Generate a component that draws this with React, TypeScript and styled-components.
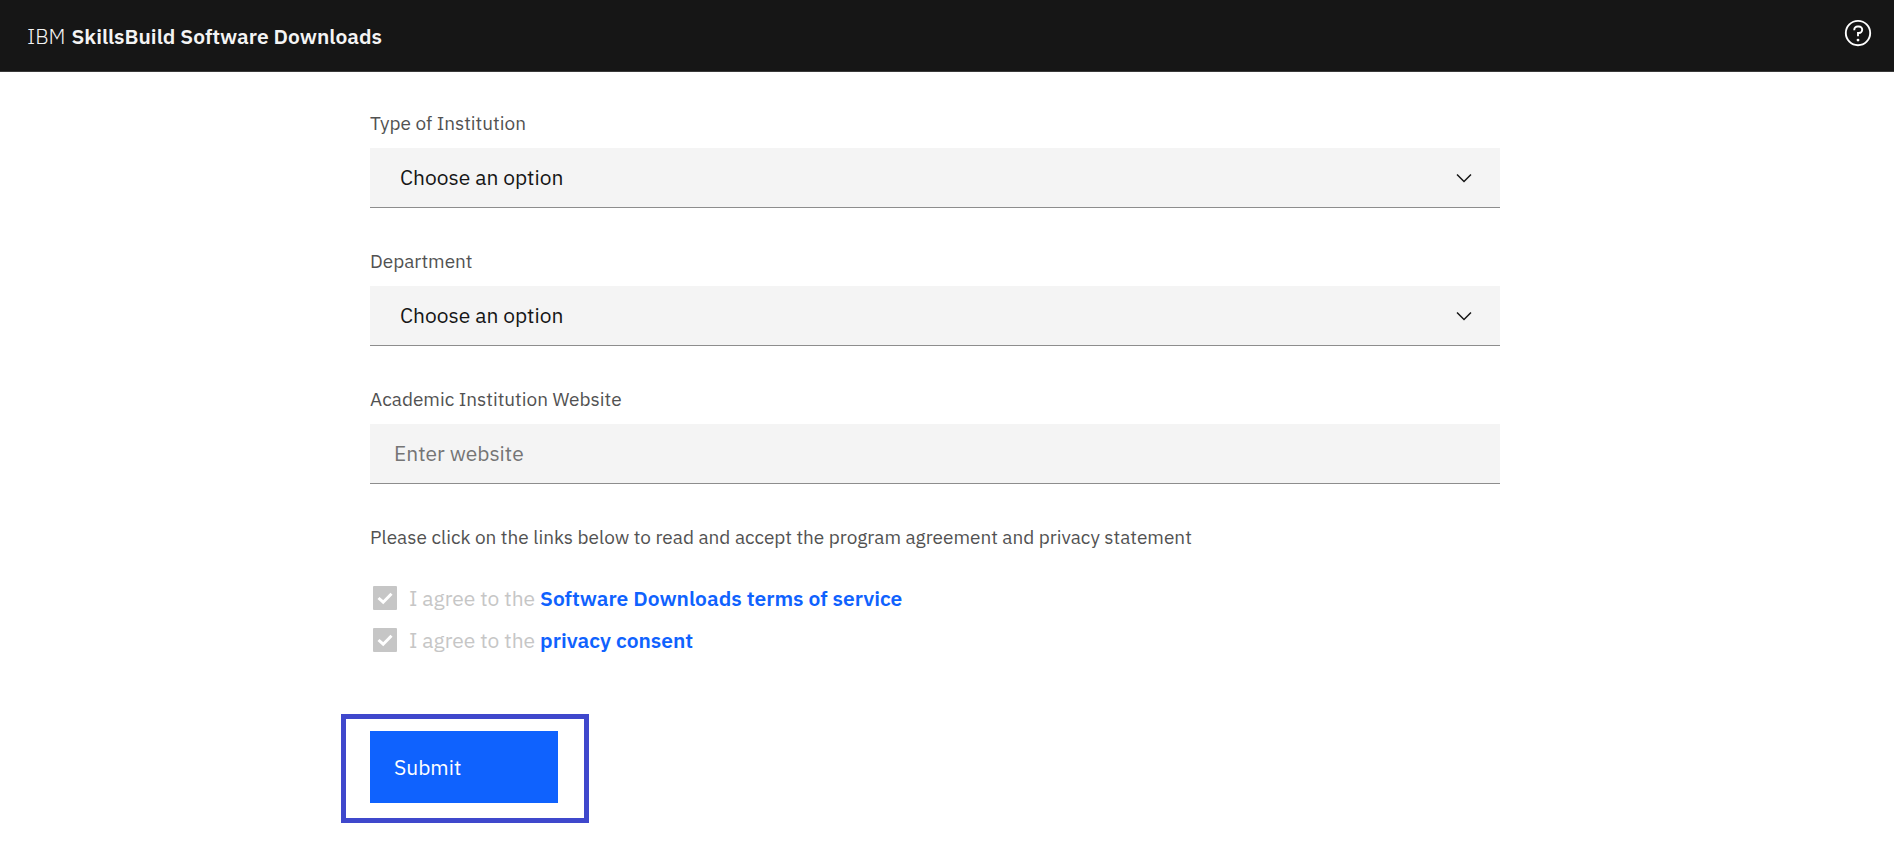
import React, { useState } from "react";
import styled, { createGlobalStyle } from "styled-components";

const GlobalStyle = createGlobalStyle`
  *, *::before, *::after { box-sizing: border-box; }
  body {
    margin: 0;
    background: #ffffff;
    color: #161616;
    font-family: "IBM Plex Sans", Roboto, "Liberation Sans", sans-serif;
    font-size: 21px;
    line-height: 30px;
  }
  button, input, select { font: inherit; }
`;

const Header = styled.header`
  display: flex;
  justify-content: space-between;
  height: 72px;
  background: #161616;
  border-bottom: 1px solid #393939;
`;

const Brand = styled.a`
  display: flex;
  align-items: center;
  gap: 6px;
  padding-left: 27px;
  color: #f4f4f4;
  text-decoration: none;
  font-weight: 300;
`;

const BrandName = styled.strong`
  font-weight: 600;
`;

const HelpButton = styled.button`
  display: grid;
  place-items: center;
  width: 72px;
  height: 66px;
  padding: 0;
  border: 0;
  background: transparent;
  color: #ffffff;
  cursor: pointer;
`;

const Main = styled.main`
  padding: 40px 24px 24px 0;
`;

const Form = styled.form`
  display: flex;
  flex-direction: column;
  gap: 42px;
  max-width: 1130px;
  margin: 0 auto;
`;

const Field = styled.div`
  display: flex;
  flex-direction: column;
  gap: 14px;
`;

const Label = styled.label`
  font-size: 19px;
  line-height: 22px;
  color: #525252;
`;

const Consent = styled.section`
  display: flex;
  flex-direction: column;
  gap: 35px;
`;

const Note = styled.p`
  margin: 0;
  font-size: 19px;
  line-height: 22px;
  color: #525252;
`;

const ControlWrap = styled.div`
  position: relative;
`;

const Control = styled.input<{ $inset: number }>`
  display: block;
  width: 100%;
  height: 60px;
  padding: 0 ${(p) => p.$inset}px 2px;
  border: 0;
  border-bottom: 1px solid #8d8d8d;
  border-radius: 0;
  background: #f4f4f4;
  color: #161616;
  appearance: none;
  &::placeholder { color: #757575; opacity: 1; }
`;

const Chevron = styled.svg`
  position: absolute;
  top: 18px;
  right: 24px;
  pointer-events: none;
`;

const Agreements = styled.div`
  display: flex;
  flex-direction: column;
  gap: 12px;
  padding-left: 3px;
`;

const AgreementRow = styled.div`
  display: flex;
  align-items: center;
  height: 30px;
`;

const CheckWrap = styled.span`
  display: grid;
  width: 24px;
  height: 24px;
  margin-right: 12px;
  > * { grid-area: 1 / 1; }
`;

const Checkbox = styled.input`
  appearance: none;
  width: 24px;
  height: 24px;
  margin: 0;
  border-radius: 1px;
  background: #c6c6c6;
`;

const CheckMark = styled.svg`
  pointer-events: none;
  z-index: 1;
`;

const AgreementLabel = styled.label`
  color: #c6c6c6;
`;

const TermsLink = styled.a`
  color: #0f62fe;
  font-weight: 600;
  text-decoration: none;
`;

const SubmitFrame = styled.div`
  align-self: flex-start;
  margin: 17px 0 0 -29px;
  padding: 12px 26px 15px 24px;
  border: 5px solid #3f48cc;
`;

const SubmitButton = styled.button`
  display: block;
  width: 188px;
  height: 72px;
  padding: 0 24px;
  border: 0;
  background: #0f62fe;
  color: #ffffff;
  text-align: left;
  cursor: pointer;
`;

function SelectField({ id, label }: { id: string; label: string }) {
  return (
    <Field>
      <Label htmlFor={id}>{label}</Label>
      <ControlWrap>
        <Control as="select" id={id} $inset={30}>
          <option>Choose an option</option>
        </Control>
        <Chevron width="24" height="24" viewBox="0 0 16 16" fill="#161616" aria-hidden="true">
          <path d="M8 11L3 6 3.7 5.3 8 9.6 12.3 5.3 13 6z" />
        </Chevron>
      </ControlWrap>
    </Field>
  );
}

function Agreement({ id, link }: { id: string; link: string }) {
  return (
    <AgreementRow>
      <CheckWrap>
        <Checkbox type="checkbox" id={id} checked disabled readOnly />
        <CheckMark width="24" height="24" viewBox="0 0 24 24" fill="none" stroke="#ffffff" strokeWidth="3" aria-hidden="true">
          <path d="M5.5 12 L10.2 16.2 L18.5 7.8" />
        </CheckMark>
      </CheckWrap>
      <AgreementLabel htmlFor={id}>
        I agree to the <TermsLink href="#">{link}</TermsLink>
      </AgreementLabel>
    </AgreementRow>
  );
}

export default function App() {
  const [website, setWebsite] = useState("");
  return (
    <>
      <GlobalStyle />
      <Header>
        <Brand href="#">
          IBM <BrandName>SkillsBuild Software Downloads</BrandName>
        </Brand>
        <HelpButton type="button" aria-label="Help">
          <svg width="30" height="30" viewBox="0 0 32 32" fill="currentColor" aria-hidden="true">
            <path d="M16 2A14 14 0 1 0 30 16 14 14 0 0 0 16 2Zm0 26A12 12 0 1 1 28 16 12 12 0 0 1 16 28Z" />
            <circle cx="16" cy="23.5" r="1.5" />
            <path d="M17 8H15.5A4.49 4.49 0 0 0 11 12.49V13h2v-.5A2.5 2.5 0 0 1 15.5 10H17a2.5 2.5 0 0 1 0 5H15v4.5h2V17a4.5 4.5 0 0 0 0-9Z" />
          </svg>
        </HelpButton>
      </Header>
      <Main>
        <Form onSubmit={(e) => e.preventDefault()}>
          <SelectField id="institution-type" label="Type of Institution" />
          <SelectField id="department" label="Department" />
          <Field>
            <Label htmlFor="website">Academic Institution Website</Label>
            <Control
              id="website"
              type="text"
              placeholder="Enter website"
              $inset={24}
              value={website}
              onChange={(e: React.ChangeEvent<HTMLInputElement>) => setWebsite(e.target.value)}
            />
          </Field>
          <Consent>
            <Note>Please click on the links below to read and accept the program agreement and privacy statement</Note>
            <Agreements>
              <Agreement id="agree-terms" link="Software Downloads terms of service" />
              <Agreement id="agree-privacy" link="privacy consent" />
            </Agreements>
          </Consent>
          <SubmitFrame>
            <SubmitButton type="submit">Submit</SubmitButton>
          </SubmitFrame>
        </Form>
      </Main>
    </>
  );
}
